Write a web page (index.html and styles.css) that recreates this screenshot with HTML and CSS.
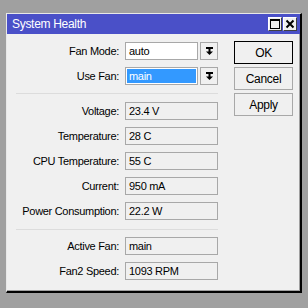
FILE: index.html
```html
<!DOCTYPE html>
<html>
<head>
<meta charset="utf-8">
<link rel="stylesheet" href="styles.css">
</head>
<body>
<div class="window">
  <div class="titlebar">
    <span class="title">System Health</span>
    <div class="tbtns">
      <span class="tbtn"><svg width="10" height="10" viewBox="0 0 10 10"><rect x="0.5" y="0.5" width="9" height="9" fill="none" stroke="#000"/><rect x="0" y="0" width="10" height="2" fill="#000"/></svg></span>
      <span class="tbtn"><svg width="10" height="10" viewBox="0 0 10 10"><path d="M1.5 1.5 L8.5 8.5 M8.5 1.5 L1.5 8.5" stroke="#000" stroke-width="2" fill="none"/></svg></span>
    </div>
  </div>
  <div class="body">
    <div class="form">
      <div class="row">
        <label class="lbl">Fan Mode:</label>
        <div class="combo">
          <div class="input">auto</div>
          <div class="drop"><svg width="9" height="9" viewBox="0 0 9 9"><rect x="1" y="0" width="7" height="2" fill="#000"/><rect x="3.5" y="2" width="2" height="3" fill="#000"/><path d="M1 4.5 H8 L4.5 8 Z" fill="#000"/></svg></div>
        </div>
      </div>
      <div class="row">
        <label class="lbl">Use Fan:</label>
        <div class="combo">
          <div class="input"><span class="sel">main</span></div>
          <div class="drop"><svg width="9" height="9" viewBox="0 0 9 9"><rect x="1" y="0" width="7" height="2" fill="#000"/><rect x="3.5" y="2" width="2" height="3" fill="#000"/><path d="M1 4.5 H8 L4.5 8 Z" fill="#000"/></svg></div>
        </div>
      </div>
      <div class="sep"></div>
      <div class="row"><label class="lbl">Voltage:</label><div class="field">23.4 V</div></div>
      <div class="row"><label class="lbl">Temperature:</label><div class="field">28 C</div></div>
      <div class="row"><label class="lbl">CPU Temperature:</label><div class="field">55 C</div></div>
      <div class="row"><label class="lbl">Current:</label><div class="field">950 mA</div></div>
      <div class="row"><label class="lbl">Power Consumption:</label><div class="field">22.2 W</div></div>
      <div class="sep sep2"></div>
      <div class="row"><label class="lbl">Active Fan:</label><div class="field">main</div></div>
      <div class="row"><label class="lbl">Fan2 Speed:</label><div class="field">1093 RPM</div></div>
    </div>
    <div class="buttons">
      <div class="btn default">OK</div>
      <div class="btn">Cancel</div>
      <div class="btn">Apply</div>
    </div>
  </div>
</div>
</body>
</html>
```
FILE: styles.css
```css
html, body {
  margin: 0;
  padding: 0;
  background: #a0a0a0;
}
body {
  font-family: "Liberation Sans", Arial, sans-serif;
  font-size: 11px;
  letter-spacing: -0.3px;
  color: #000;
}
.window {
  margin: 13px 0 0 6px;
  width: 296px;
  height: 280px;
  box-sizing: border-box;
  background: #f0f0f0;
  border-top: 1px solid #e8e8e8;
  border-left: 1px solid #e8e8e8;
  border-right: 2px solid #000;
  border-bottom: 2px solid #000;
  box-shadow: inset -1px -1px 0 #a0a0a0;
  display: flex;
  flex-direction: column;
}
.titlebar {
  height: 20px;
  background: #4a50c8;
  color: #fff;
  display: flex;
  align-items: center;
  justify-content: space-between;
  padding: 0 3px 0 5px;
  font-size: 12px;
}
.tbtns {
  display: flex;
  gap: 1px;
}
.tbtn {
  width: 14px;
  height: 14px;
  box-sizing: border-box;
  background: #f0f0f0;
  border: 1px solid;
  border-color: #fff #404040 #404040 #fff;
  display: flex;
  align-items: center;
  justify-content: center;
}
.body {
  display: flex;
  padding: 8px 7px 0 0;
}
.form {
  display: flex;
  flex-direction: column;
  gap: 7px;
  width: 211px;
}
.row {
  display: flex;
  align-items: center;
  height: 18px;
}
.lbl {
  width: 112px;
  text-align: right;
  margin-right: 6px;
  white-space: nowrap;
}
.combo {
  display: flex;
  width: 93px;
  height: 18px;
  gap: 2px;
}
.input {
  flex: 1;
  box-sizing: border-box;
  background: #fff;
  border: 1px solid #a8a8a8;
  padding: 1px;
  display: flex;
  align-items: center;
}
.input:not(:has(.sel)) {
  padding-left: 3px;
}
.sel {
  flex: 1;
  align-self: stretch;
  background: #3399ff;
  color: #fff;
  padding-left: 2px;
  display: flex;
  align-items: center;
}
.drop {
  width: 18px;
  box-sizing: border-box;
  border: 1px solid #a8a8a8;
  background: #f0f0f0;
  display: flex;
  align-items: center;
  justify-content: center;
}
.field {
  width: 93px;
  height: 18px;
  box-sizing: border-box;
  border: 1px solid #a8a8a8;
  background: #f0f0f0;
  padding-left: 3px;
  display: flex;
  align-items: center;
}
.sep {
  height: 1px;
  background: #dcdcdc;
  margin: 1px 0 1px 9px;
  width: 202px;
}
.sep2 {
  margin: 2px 0 0 9px;
}
.buttons {
  margin-left: 16px;
  display: flex;
  flex-direction: column;
  gap: 3px;
  margin-top: -1px;
}
.btn {
  width: 59px;
  height: 23px;
  box-sizing: border-box;
  border: 1px solid #a8a8a8;
  background: #f0f0f0;
  display: flex;
  align-items: center;
  justify-content: center;
  font-size: 12px;
}
.btn.default {
  border-color: #000;
}
```
